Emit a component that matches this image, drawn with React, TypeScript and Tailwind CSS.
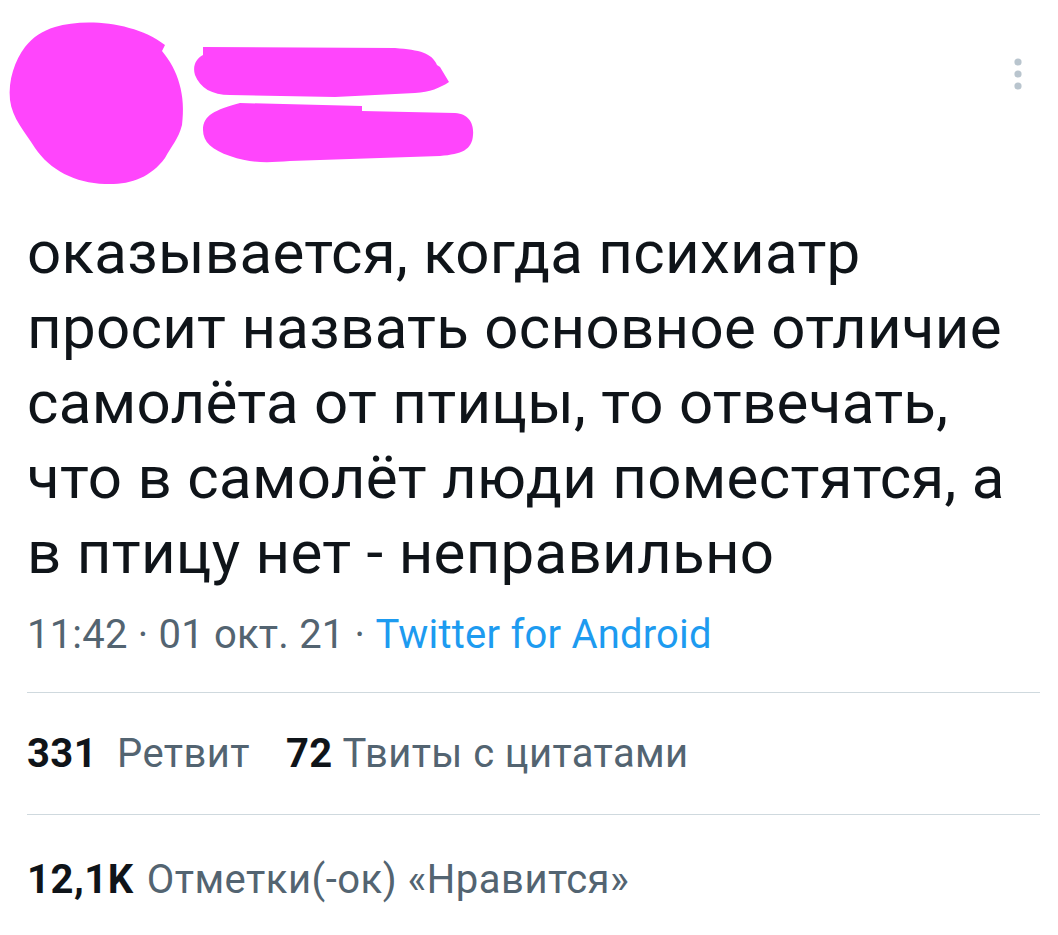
import { useState } from "react";

const PINK = "#ff45fc";

const BlobHeader = () => (
  <svg width="480" height="190" viewBox="0 0 480 190" className="block">
    <path
      fill={PINK}
      d="M 55 27 C 85 18, 135 22, 165 45 L 162 51 C 178 70, 186 95, 182 125 C 178 140, 172 145, 165 158 C 150 178, 130 185, 105 184 C 75 183, 50 170, 35 148 C 25 132, 12 118, 10 100 C 8 80, 15 60, 25 47 C 33 37, 42 31, 55 27 Z"
    />
    <path
      fill={PINK}
      d="M 203 47 L 395 48 C 420 50, 432 53, 437 65 L 440 67 L 449 82 C 440 88, 430 92, 415 93 L 335 97 L 230 95 C 212 95, 200 88, 195 75 C 192 65, 197 58, 203 55 Z"
    />
    <path
      fill={PINK}
      d="M 240 103 L 362 106 L 362 111 L 455 113 C 470 114, 474 125, 473 135 C 472 150, 462 154, 440 156 L 290 161 C 265 163, 250 163, 230 156 C 212 150, 203 142, 203 130 C 203 115, 215 110, 240 103 Z"
    />
  </svg>
);

const MoreIcon = () => (
  <svg width="10" height="34" viewBox="0 0 10 34" className="block">
    <circle cx="5" cy="5" r="3.6" fill="#b9c5ce" />
    <circle cx="5" cy="17" r="3.6" fill="#b9c5ce" />
    <circle cx="5" cy="29" r="3.6" fill="#b9c5ce" />
  </svg>
);

// строки твита — переносы как на скриншоте
const lines = [
  "оказывается, когда психиатр",
  "просит назвать основное отличие",
  "самолёта от птицы, то отвечать,",
  "что в самолёт люди поместятся, а",
  "в птицу нет - неправильно",
];

const App = () => {
  const [liked] = useState(false);
  return (
    <div
      className="w-[1058px] h-[935px] bg-white overflow-hidden"
      style={{ fontFamily: "Roboto, 'Noto Sans', sans-serif" }}
    >
      <div className="flex justify-between items-start">
        <BlobHeader />
        <div className="pt-[57px] pr-[35px]">
          <MoreIcon />
        </div>
      </div>

      <div className="pl-[27px] pr-[18px]">
        <p className="mt-[25px] text-[60px] leading-[75px] tracking-[0.3px] text-[#0f1419] whitespace-nowrap">
          {lines.map((l) => (
            <span key={l} className="block">
              {l}
            </span>
          ))}
        </p>

        <div className="mt-[21px] text-[40px] leading-[48px] tracking-[0.2px] text-[#536471]">
          11:42 · 01 окт. 21 · <span className="text-[#1d9bf0]">Twitter for Android</span>
        </div>

        <div className="mt-[33px] border-t border-[#cfd9de]" />

        <div className="flex items-center h-[121px] text-[40px] tracking-[0.4px] text-[#536471]">
          <span className="font-bold text-[#0f1419]">331</span>
          <span className="ml-[20px]">Ретвит</span>
          <span className="ml-[36px] font-bold text-[#0f1419]">72</span>
          <span className="ml-[10px]">Твиты с цитатами</span>
        </div>

        <div className="border-t border-[#cfd9de]" />

        <div className="flex items-center h-[130px] text-[40px] tracking-[0.5px] text-[#536471]">
          <span className={liked ? "font-bold text-[#f91880]" : "font-bold text-[#0f1419]"}>
            12,1K
          </span>
          <span className="ml-[13px]">Отметки(-ок) «Нравится»</span>
        </div>
      </div>
    </div>
  );
};

export default App;
